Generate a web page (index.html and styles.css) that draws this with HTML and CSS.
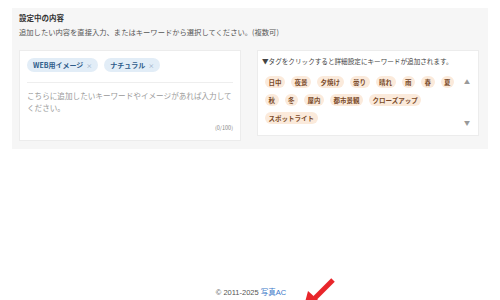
FILE: index.html
```html
<!DOCTYPE html>
<html lang="ja">
<head>
    <meta charset="UTF-8">
    <meta name="viewport" content="width=device-width, initial-scale=1.0">
    <title>設定中の内容</title>
    <link rel="stylesheet" href="styles.css">
</head>
<body>
    <div class="panel">
        <div class="panel-title">設定中の内容</div>
        <div class="panel-sub">追加したい内容を直接入力、またはキーワードから選択してください。(複数可)</div>

        <div class="cards">
            <div class="card card-input">
                <div class="chosen">
                    <span class="chip">WEB用イメージ <span class="x">×</span></span>
                    <span class="chip">ナチュラル <span class="x">×</span></span>
                </div>
                <textarea class="free" placeholder="こちらに追加したいキーワードやイメージがあれば入力してください。"></textarea>
                <div class="count">(0/100)</div>
            </div>

            <div class="card card-tags">
                <div class="hint">▼タグをクリックすると詳細設定にキーワードが追加されます。</div>
                <div class="tag-area">
                    <div class="tags">
                        <span class="tag">日中</span>
                        <span class="tag">夜景</span>
                        <span class="tag">夕焼け</span>
                        <span class="tag">曇り</span>
                        <span class="tag">晴れ</span>
                        <span class="tag">雨</span>
                        <span class="tag">春</span>
                        <span class="tag">夏</span>
                        <span class="tag">秋</span>
                        <span class="tag">冬</span>
                        <span class="tag">屋内</span>
                        <span class="tag">都市景観</span>
                        <span class="tag">クローズアップ</span>
                        <span class="tag">スポットライト</span>
                    </div>
                    <div class="scroll">
                        <span>▲</span>
                        <span>▼</span>
                    </div>
                </div>
            </div>
        </div>
    </div>

    <div class="footer">© 2011-2025 <a href="#">写真AC</a></div>

    <svg class="arrow" width="40" height="24" viewBox="0 0 40 24">
        <line x1="33" y1="4" x2="15" y2="22" stroke="#e8262b" stroke-width="5"/>
        <polygon points="8,15 27,32 3,34" fill="#e8262b"/>
    </svg>
</body>
</html>
```

FILE: styles.css
```css
body { margin: 0; background: #fff; font-family: "Noto Sans CJK JP", "Noto Sans", sans-serif; color: #333; position: relative; height: 300px; overflow: hidden; }
.panel { margin: 8px 12px 0; width: 476px; box-sizing: border-box; background: #f6f6f6; padding: 5px 9px 8px 7px; }
.panel-title { font-size: 7.5px; font-weight: bold; line-height: 10px; color: #333; }
.panel-sub { font-size: 7.3px; line-height: 10px; color: #555; margin-top: 4px; }
.cards { display: flex; gap: 16px; margin-top: 13px; align-items: flex-start; }
.card { background: #fff; border: 1px solid #ececec; width: 222px; box-sizing: border-box; }

.card-input { height: 91px; padding: 7px 7px 0 7px; display: flex; flex-direction: column; }
.chosen { display: flex; gap: 6px; padding-bottom: 10px; border-bottom: 1px solid #eee; }
.chip { display: inline-flex; align-items: center; gap: 3px; height: 14px; padding: 0 6px; border-radius: 7px; background: #e2edf7; color: #2f5c8a; font-size: 7px; font-weight: bold; }
.chip .x { color: #8aa3bd; font-weight: normal; font-size: 6px; }
.free { border: none; resize: none; outline: none; padding: 0; margin-top: 7px; height: 28px; font-family: inherit; font-size: 7.6px; line-height: 11.5px; color: #333; background: transparent; }
.free::placeholder { color: #999; }
.count { text-align: right; font-size: 5.5px; color: #888; margin-top: 6px; }

.card-tags { height: 86px; padding: 6px 6px 0 4px; }
.hint { font-size: 6.6px; line-height: 9px; color: #444; }
.tag-area { display: flex; justify-content: space-between; margin-top: 10px; padding-left: 3px; }
.tags { width: 190px; display: flex; flex-wrap: wrap; gap: 6px 6px; align-content: flex-start; }
.tag { height: 12px; line-height: 12px; padding: 0 3.5px; border-radius: 6px; background: #fbeadb; color: #7a4a2a; font-size: 6.5px; font-weight: bold; }
.scroll { display: flex; flex-direction: column; justify-content: space-between; height: 50px; font-size: 6px; color: #999; padding-right: 2px; padding-top: 1px; }

.footer { margin-top: 139px; text-align: center; font-family: "Liberation Sans", "Noto Sans CJK JP", sans-serif; font-size: 7.5px; color: #555; line-height: 10px; padding-left: 2px; }
.footer a { color: #3a78c9; text-decoration: none; }
.arrow { position: absolute; left: 300px; top: 276px; }
```
